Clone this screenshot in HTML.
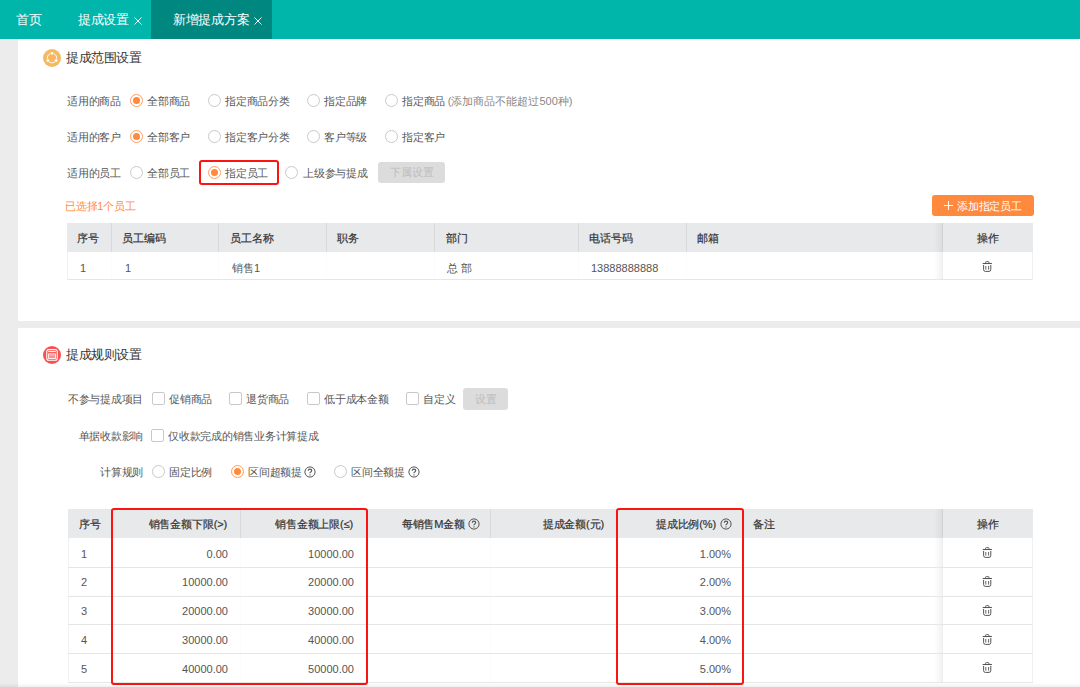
<!DOCTYPE html>
<html><head><meta charset="utf-8">
<style>
*{margin:0;padding:0;box-sizing:border-box}
html,body{width:1080px;height:687px;overflow:hidden;background:#ececec;font-family:"Liberation Sans",sans-serif;color:#555}
.a{position:absolute;white-space:nowrap}
#tabs{position:absolute;left:0;top:0;width:1080px;height:39px;background:#00b5aa}
.tabt{top:12px;line-height:16px;font-size:13px;color:#fff;letter-spacing:-0.3px}
.sec{position:absolute;left:18px;width:1062px;background:#fff}
.t{font-size:11px;line-height:14px;color:#555;letter-spacing:-0.25px}
.rd{position:absolute;width:13px;height:13px;border:1px solid #c9c9c9;border-radius:50%;background:#fff}
.rd.on{border-color:#ff9d62}
.rd.on::after{content:"";position:absolute;left:2px;top:2px;width:7px;height:7px;border-radius:50%;background:#ff8a3d}
.cb{position:absolute;width:13px;height:13px;border:1px solid #c9c9c9;border-radius:2px;background:#fff}
.btn-dis{position:absolute;background:#dcdcdc;color:#bdbdbd;font-size:11px;text-align:center;border-radius:3px}
.title{font-size:13px;color:#333;line-height:16px;letter-spacing:-0.5px}
.th{position:absolute;background:#e8e9eb}
.hd{font-size:11px;font-weight:normal;color:#333;line-height:14px;letter-spacing:-0.15px;-webkit-text-stroke:0.2px #333}
.cell{font-size:11px;color:#555;line-height:14px}
.vl{position:absolute;width:1px;background:#d9d9d9}
.hl{position:absolute;height:1px;background:#e6e6e6}
.redbox{position:absolute;border:2px solid #fc1410;border-radius:3px}
</style></head><body>
<div id="tabs">
<div class="a" style="left:151px;top:0;width:121px;height:39px;background:#00877f"></div>
<div class="a tabt" style="left:16px">首页</div>
<div class="a tabt" style="left:78px">提成设置</div>
<div class="a" style="left:134px;top:17px;line-height:0"><svg width="8" height="8" viewBox="0 0 8 8"><path d="M0.5 0.5L7.5 7.5M7.5 0.5L0.5 7.5" stroke="#fff" stroke-width="1"/></svg></div>
<div class="a tabt" style="left:173px">新增提成方案</div>
<div class="a" style="left:254px;top:17px;line-height:0"><svg width="8" height="8" viewBox="0 0 8 8"><path d="M0.5 0.5L7.5 7.5M7.5 0.5L0.5 7.5" stroke="#fff" stroke-width="1"/></svg></div>
</div>
<div class="sec" style="top:39px;height:282px"></div>
<svg class="a" style="left:43px;top:49px" width="18" height="18" viewBox="0 0 18 18"><circle cx="9" cy="9" r="9" fill="#f5b961"/><path d="M10.80 4.65A4.8 4.8 0 0 1 13.75 9.77" fill="none" stroke="#fff" stroke-width="0.9"/><path d="M11.96 12.88A4.8 4.8 0 0 1 6.04 12.88" fill="none" stroke="#fff" stroke-width="0.9"/><path d="M4.25 9.77A4.8 4.8 0 0 1 7.20 4.65" fill="none" stroke="#fff" stroke-width="0.9"/><circle cx="9.00" cy="4.30" r="1.35" fill="#fff"/><circle cx="13.16" cy="11.50" r="1.35" fill="#fff"/><circle cx="4.84" cy="11.50" r="1.35" fill="#fff"/></svg>
<div class="a title" style="left:66px;top:50px">提成范围设置</div>
<div class="a t" style="left:67px;top:94px">适用的商品</div>
<div class="rd on" style="left:130px;top:94px"></div>
<div class="a t" style="left:147px;top:94px">全部商品</div>
<div class="rd" style="left:208px;top:94px"></div>
<div class="a t" style="left:225px;top:94px">指定商品分类</div>
<div class="rd" style="left:307px;top:94px"></div>
<div class="a t" style="left:324px;top:94px">指定品牌</div>
<div class="rd" style="left:385px;top:94px"></div>
<div class="a t" style="left:402px;top:94px">指定商品 <span style="color:#888;letter-spacing:0">(添加商品不能超过500种)</span></div>
<div class="a t" style="left:67px;top:130px">适用的客户</div>
<div class="rd on" style="left:130px;top:130px"></div>
<div class="a t" style="left:147px;top:130px">全部客户</div>
<div class="rd" style="left:208px;top:130px"></div>
<div class="a t" style="left:225px;top:130px">指定客户分类</div>
<div class="rd" style="left:307px;top:130px"></div>
<div class="a t" style="left:324px;top:130px">客户等级</div>
<div class="rd" style="left:385px;top:130px"></div>
<div class="a t" style="left:402px;top:130px">指定客户</div>
<div class="a t" style="left:67px;top:166px">适用的员工</div>
<div class="rd" style="left:130px;top:166px"></div>
<div class="a t" style="left:147px;top:166px">全部员工</div>
<div class="rd on" style="left:208px;top:166px"></div>
<div class="a t" style="left:225px;top:166px">指定员工</div>
<div class="rd" style="left:285px;top:166px"></div>
<div class="a t" style="left:303px;top:166px">上级参与提成</div>
<div class="redbox" style="left:199px;top:160px;width:80px;height:25px"></div>
<div class="btn-dis" style="left:378px;top:162px;width:67px;height:21px;line-height:21px">下属设置</div>
<div class="a t" style="left:65px;top:199px;color:#ff8a3d">已选择1个员工</div>
<div class="a" style="left:932px;top:195px;width:102px;height:21px;background:#ff8a3d;border-radius:3px"></div>
<svg class="a" style="left:944px;top:201px" width="9" height="9" viewBox="0 0 9 9"><path d="M4.5 0V9M0 4.5H9" stroke="#fff" stroke-width="1.1"/></svg>
<div class="a" style="left:957px;top:199px;color:#fff;font-size:11px;line-height:14px;letter-spacing:-0.25px">添加指定员工</div>
<div class="th" style="left:67px;top:223px;width:966px;height:29px"></div>
<div class="vl" style="left:111px;top:223px;height:29px"></div>
<div class="vl" style="left:111px;top:252px;height:27.00px;background:#fcfcfc"></div>
<div class="vl" style="left:218px;top:223px;height:29px"></div>
<div class="vl" style="left:218px;top:252px;height:27.00px;background:#fcfcfc"></div>
<div class="vl" style="left:326px;top:223px;height:29px"></div>
<div class="vl" style="left:326px;top:252px;height:27.00px;background:#fcfcfc"></div>
<div class="vl" style="left:434px;top:223px;height:29px"></div>
<div class="vl" style="left:434px;top:252px;height:27.00px;background:#fcfcfc"></div>
<div class="vl" style="left:578px;top:223px;height:29px"></div>
<div class="vl" style="left:578px;top:252px;height:27.00px;background:#fcfcfc"></div>
<div class="vl" style="left:686px;top:223px;height:29px"></div>
<div class="vl" style="left:686px;top:252px;height:27.00px;background:#fcfcfc"></div>
<div class="a" style="left:934px;top:223px;width:8px;height:56.00px;background:linear-gradient(90deg,rgba(0,0,0,0),rgba(0,0,0,.05))"></div>
<div class="vl" style="left:942px;top:223px;height:29px;background:#d2d2d2"></div>
<div class="vl" style="left:942px;top:252px;height:27.00px;background:#eeeeee"></div>
<div class="vl" style="left:67px;top:252px;height:27.00px;background:#f0f0f0"></div>
<div class="vl" style="left:1032px;top:252px;height:27.00px;background:#f0f0f0"></div>
<div class="hl" style="left:67px;top:279.10px;width:966px"></div>
<div class="a hd" style="left:77px;top:231px">序号</div>
<div class="a hd" style="left:122px;top:231px">员工编码</div>
<div class="a hd" style="left:230px;top:231px">员工名称</div>
<div class="a hd" style="left:337px;top:231px">职务</div>
<div class="a hd" style="left:446px;top:231px">部门</div>
<div class="a hd" style="left:589px;top:231px">电话号码</div>
<div class="a hd" style="left:697px;top:231px">邮箱</div>
<div class="a hd" style="left:977px;top:231px">操作</div>
<div class="a cell" style="left:80px;top:260.5px">1</div>
<div class="a cell" style="left:125px;top:260.5px">1</div>
<div class="a cell" style="left:232px;top:260.5px">销售1</div>
<div class="a cell" style="left:447px;top:260.5px">总 部</div>
<div class="a cell" style="left:591px;top:260.5px">13888888888</div>
<div class="a" style="left:982px;top:260px;line-height:0"><svg width="11" height="13" viewBox="0 0 11 13" fill="none" stroke="#555"><path d="M3.5 3.3V2.5Q3.5 1.6 4.4 1.6H6.1Q7 1.6 7 2.5V3.3" stroke-width="0.9"/><path d="M0.7 3.5H9.9" stroke-width="1.1"/><path d="M1.6 5V9.6Q1.6 11.4 3.4 11.4H7Q8.8 11.4 8.8 9.6V5" stroke-width="1"/><path d="M3.8 6V9.6M6.6 6V9.6" stroke-width="0.9"/></svg></div>
<div class="sec" style="top:328px;height:359px"></div>
<svg class="a" style="left:43px;top:346px" width="18" height="18" viewBox="0 0 18 18"><circle cx="9" cy="9" r="9" fill="#fb5050"/><rect x="3.75" y="3.6" width="10.5" height="10.6" rx="2" fill="none" stroke="#fff" stroke-width="1.1"/><path d="M5.2 5.6H12.8" stroke="#fff" stroke-width="1"/><rect x="5.6" y="7.9" width="6.8" height="4.6" fill="#fff" fill-opacity=".25" stroke="#fff" stroke-width=".9"/><path d="M6.3 9.5H11.7M6.3 11H11.7" stroke="#fff" stroke-width=".6" stroke-opacity=".5"/></svg>
<div class="a title" style="left:66px;top:347px">提成规则设置</div>
<div class="a t" style="right:937px;top:392px">不参与提成项目</div>
<div class="cb" style="left:152px;top:392px"></div>
<div class="a t" style="left:169px;top:392px">促销商品</div>
<div class="cb" style="left:229px;top:392px"></div>
<div class="a t" style="left:246px;top:392px">退货商品</div>
<div class="cb" style="left:307px;top:392px"></div>
<div class="a t" style="left:324px;top:392px">低于成本金额</div>
<div class="cb" style="left:406px;top:392px"></div>
<div class="a t" style="left:423px;top:392px">自定义</div>
<div class="btn-dis" style="left:463px;top:388px;width:45px;height:22px;line-height:22px">设置</div>
<div class="a t" style="right:937px;top:429px">单据收款影响</div>
<div class="cb" style="left:151px;top:429px"></div>
<div class="a t" style="left:168px;top:429px">仅收款完成的销售业务计算提成</div>
<div class="a t" style="right:937px;top:465px">计算规则</div>
<div class="rd" style="left:152px;top:465px"></div>
<div class="a t" style="left:169px;top:465px">固定比例</div>
<div class="rd on" style="left:231px;top:465px"></div>
<div class="a t" style="left:248px;top:465px">区间超额提</div>
<div class="rd" style="left:334px;top:465px"></div>
<div class="a t" style="left:351px;top:465px">区间全额提</div>
<svg class="a" style="left:303.85px;top:466.25px" width="12" height="12" viewBox="0 0 12 12"><circle cx="6" cy="6" r="5.1" fill="none" stroke="#555" stroke-width="1"/><path d="M4.3 4.7Q4.3 3.1 6 3.1Q7.7 3.1 7.7 4.6Q7.7 5.5 6.8 5.9Q6 6.3 6 7.3" fill="none" stroke="#555" stroke-width="1.15"/><circle cx="6" cy="8.9" r=".65" fill="#555"/></svg>
<svg class="a" style="left:407.75px;top:466.25px" width="12" height="12" viewBox="0 0 12 12"><circle cx="6" cy="6" r="5.1" fill="none" stroke="#555" stroke-width="1"/><path d="M4.3 4.7Q4.3 3.1 6 3.1Q7.7 3.1 7.7 4.6Q7.7 5.5 6.8 5.9Q6 6.3 6 7.3" fill="none" stroke="#555" stroke-width="1.15"/><circle cx="6" cy="8.9" r=".65" fill="#555"/></svg>
<div class="th" style="left:68px;top:509px;width:965px;height:29px"></div>
<div class="vl" style="left:111px;top:509px;height:29px"></div>
<div class="vl" style="left:111px;top:538px;height:143.75px;background:#fcfcfc"></div>
<div class="vl" style="left:240px;top:509px;height:29px"></div>
<div class="vl" style="left:240px;top:538px;height:143.75px;background:#fcfcfc"></div>
<div class="vl" style="left:367px;top:509px;height:29px"></div>
<div class="vl" style="left:367px;top:538px;height:143.75px;background:#fcfcfc"></div>
<div class="vl" style="left:490px;top:509px;height:29px"></div>
<div class="vl" style="left:490px;top:538px;height:143.75px;background:#fcfcfc"></div>
<div class="vl" style="left:617px;top:509px;height:29px"></div>
<div class="vl" style="left:617px;top:538px;height:143.75px;background:#fcfcfc"></div>
<div class="vl" style="left:742px;top:509px;height:29px"></div>
<div class="vl" style="left:742px;top:538px;height:143.75px;background:#fcfcfc"></div>
<div class="a" style="left:934px;top:509px;width:8px;height:172.75px;background:linear-gradient(90deg,rgba(0,0,0,0),rgba(0,0,0,.05))"></div>
<div class="vl" style="left:942px;top:509px;height:29px;background:#d2d2d2"></div>
<div class="vl" style="left:942px;top:538px;height:143.75px;background:#eeeeee"></div>
<div class="vl" style="left:68px;top:538px;height:143.75px;background:#f0f0f0"></div>
<div class="vl" style="left:1032px;top:538px;height:143.75px;background:#f0f0f0"></div>
<div class="hl" style="left:68px;top:566.85px;width:965px"></div>
<div class="hl" style="left:68px;top:595.60px;width:965px"></div>
<div class="hl" style="left:68px;top:624.35px;width:965px"></div>
<div class="hl" style="left:68px;top:653.10px;width:965px"></div>
<div class="hl" style="left:68px;top:681.85px;width:965px"></div>
<div class="a hd" style="left:79px;top:517px">序号</div>
<div class="a hd" style="right:853px;top:517px">销售金额下限(&gt;)</div>
<div class="a hd" style="right:727px;top:517px">销售金额上限(≤)</div>
<div class="a hd" style="right:615px;top:517px">每销售M金额</div>
<svg class="a" style="left:467.50px;top:517.90px" width="12" height="12" viewBox="0 0 12 12"><circle cx="6" cy="6" r="5.1" fill="none" stroke="#555" stroke-width="1"/><path d="M4.3 4.7Q4.3 3.1 6 3.1Q7.7 3.1 7.7 4.6Q7.7 5.5 6.8 5.9Q6 6.3 6 7.3" fill="none" stroke="#555" stroke-width="1.15"/><circle cx="6" cy="8.9" r=".65" fill="#555"/></svg>
<div class="a hd" style="right:476px;top:517px">提成金额(元)</div>
<div class="a hd" style="right:364px;top:517px">提成比例(%)</div>
<svg class="a" style="left:719.50px;top:517.90px" width="12" height="12" viewBox="0 0 12 12"><circle cx="6" cy="6" r="5.1" fill="none" stroke="#555" stroke-width="1"/><path d="M4.3 4.7Q4.3 3.1 6 3.1Q7.7 3.1 7.7 4.6Q7.7 5.5 6.8 5.9Q6 6.3 6 7.3" fill="none" stroke="#555" stroke-width="1.15"/><circle cx="6" cy="8.9" r=".65" fill="#555"/></svg>
<div class="a hd" style="left:753px;top:517px">备注</div>
<div class="a hd" style="left:977px;top:517px">操作</div>
<div class="a cell" style="left:81px;top:546.50px">1</div>
<div class="a cell" style="right:852px;top:546.50px">0.00</div>
<div class="a cell" style="right:726px;top:546.50px">10000.00</div>
<div class="a cell" style="right:349px;top:546.50px">1.00%</div>
<div class="a" style="left:982px;top:546.25px;line-height:0"><svg width="11" height="13" viewBox="0 0 11 13" fill="none" stroke="#555"><path d="M3.5 3.3V2.5Q3.5 1.6 4.4 1.6H6.1Q7 1.6 7 2.5V3.3" stroke-width="0.9"/><path d="M0.7 3.5H9.9" stroke-width="1.1"/><path d="M1.6 5V9.6Q1.6 11.4 3.4 11.4H7Q8.8 11.4 8.8 9.6V5" stroke-width="1"/><path d="M3.8 6V9.6M6.6 6V9.6" stroke-width="0.9"/></svg></div>
<div class="a cell" style="left:81px;top:575.25px">2</div>
<div class="a cell" style="right:852px;top:575.25px">10000.00</div>
<div class="a cell" style="right:726px;top:575.25px">20000.00</div>
<div class="a cell" style="right:349px;top:575.25px">2.00%</div>
<div class="a" style="left:982px;top:575.00px;line-height:0"><svg width="11" height="13" viewBox="0 0 11 13" fill="none" stroke="#555"><path d="M3.5 3.3V2.5Q3.5 1.6 4.4 1.6H6.1Q7 1.6 7 2.5V3.3" stroke-width="0.9"/><path d="M0.7 3.5H9.9" stroke-width="1.1"/><path d="M1.6 5V9.6Q1.6 11.4 3.4 11.4H7Q8.8 11.4 8.8 9.6V5" stroke-width="1"/><path d="M3.8 6V9.6M6.6 6V9.6" stroke-width="0.9"/></svg></div>
<div class="a cell" style="left:81px;top:604.00px">3</div>
<div class="a cell" style="right:852px;top:604.00px">20000.00</div>
<div class="a cell" style="right:726px;top:604.00px">30000.00</div>
<div class="a cell" style="right:349px;top:604.00px">3.00%</div>
<div class="a" style="left:982px;top:603.75px;line-height:0"><svg width="11" height="13" viewBox="0 0 11 13" fill="none" stroke="#555"><path d="M3.5 3.3V2.5Q3.5 1.6 4.4 1.6H6.1Q7 1.6 7 2.5V3.3" stroke-width="0.9"/><path d="M0.7 3.5H9.9" stroke-width="1.1"/><path d="M1.6 5V9.6Q1.6 11.4 3.4 11.4H7Q8.8 11.4 8.8 9.6V5" stroke-width="1"/><path d="M3.8 6V9.6M6.6 6V9.6" stroke-width="0.9"/></svg></div>
<div class="a cell" style="left:81px;top:632.75px">4</div>
<div class="a cell" style="right:852px;top:632.75px">30000.00</div>
<div class="a cell" style="right:726px;top:632.75px">40000.00</div>
<div class="a cell" style="right:349px;top:632.75px">4.00%</div>
<div class="a" style="left:982px;top:632.50px;line-height:0"><svg width="11" height="13" viewBox="0 0 11 13" fill="none" stroke="#555"><path d="M3.5 3.3V2.5Q3.5 1.6 4.4 1.6H6.1Q7 1.6 7 2.5V3.3" stroke-width="0.9"/><path d="M0.7 3.5H9.9" stroke-width="1.1"/><path d="M1.6 5V9.6Q1.6 11.4 3.4 11.4H7Q8.8 11.4 8.8 9.6V5" stroke-width="1"/><path d="M3.8 6V9.6M6.6 6V9.6" stroke-width="0.9"/></svg></div>
<div class="a cell" style="left:81px;top:661.50px">5</div>
<div class="a cell" style="right:852px;top:661.50px">40000.00</div>
<div class="a cell" style="right:726px;top:661.50px">50000.00</div>
<div class="a cell" style="right:349px;top:661.50px">5.00%</div>
<div class="a" style="left:982px;top:661.25px;line-height:0"><svg width="11" height="13" viewBox="0 0 11 13" fill="none" stroke="#555"><path d="M3.5 3.3V2.5Q3.5 1.6 4.4 1.6H6.1Q7 1.6 7 2.5V3.3" stroke-width="0.9"/><path d="M0.7 3.5H9.9" stroke-width="1.1"/><path d="M1.6 5V9.6Q1.6 11.4 3.4 11.4H7Q8.8 11.4 8.8 9.6V5" stroke-width="1"/><path d="M3.8 6V9.6M6.6 6V9.6" stroke-width="0.9"/></svg></div>
<div class="redbox" style="left:111px;top:508px;width:257px;height:176.75px"></div>
<div class="redbox" style="left:616px;top:508px;width:128px;height:176.75px"></div>
<div class="a" style="left:0;top:683px;width:1080px;height:4px;background:linear-gradient(rgba(0,0,0,0),rgba(0,0,0,.06))"></div>
</body></html>
